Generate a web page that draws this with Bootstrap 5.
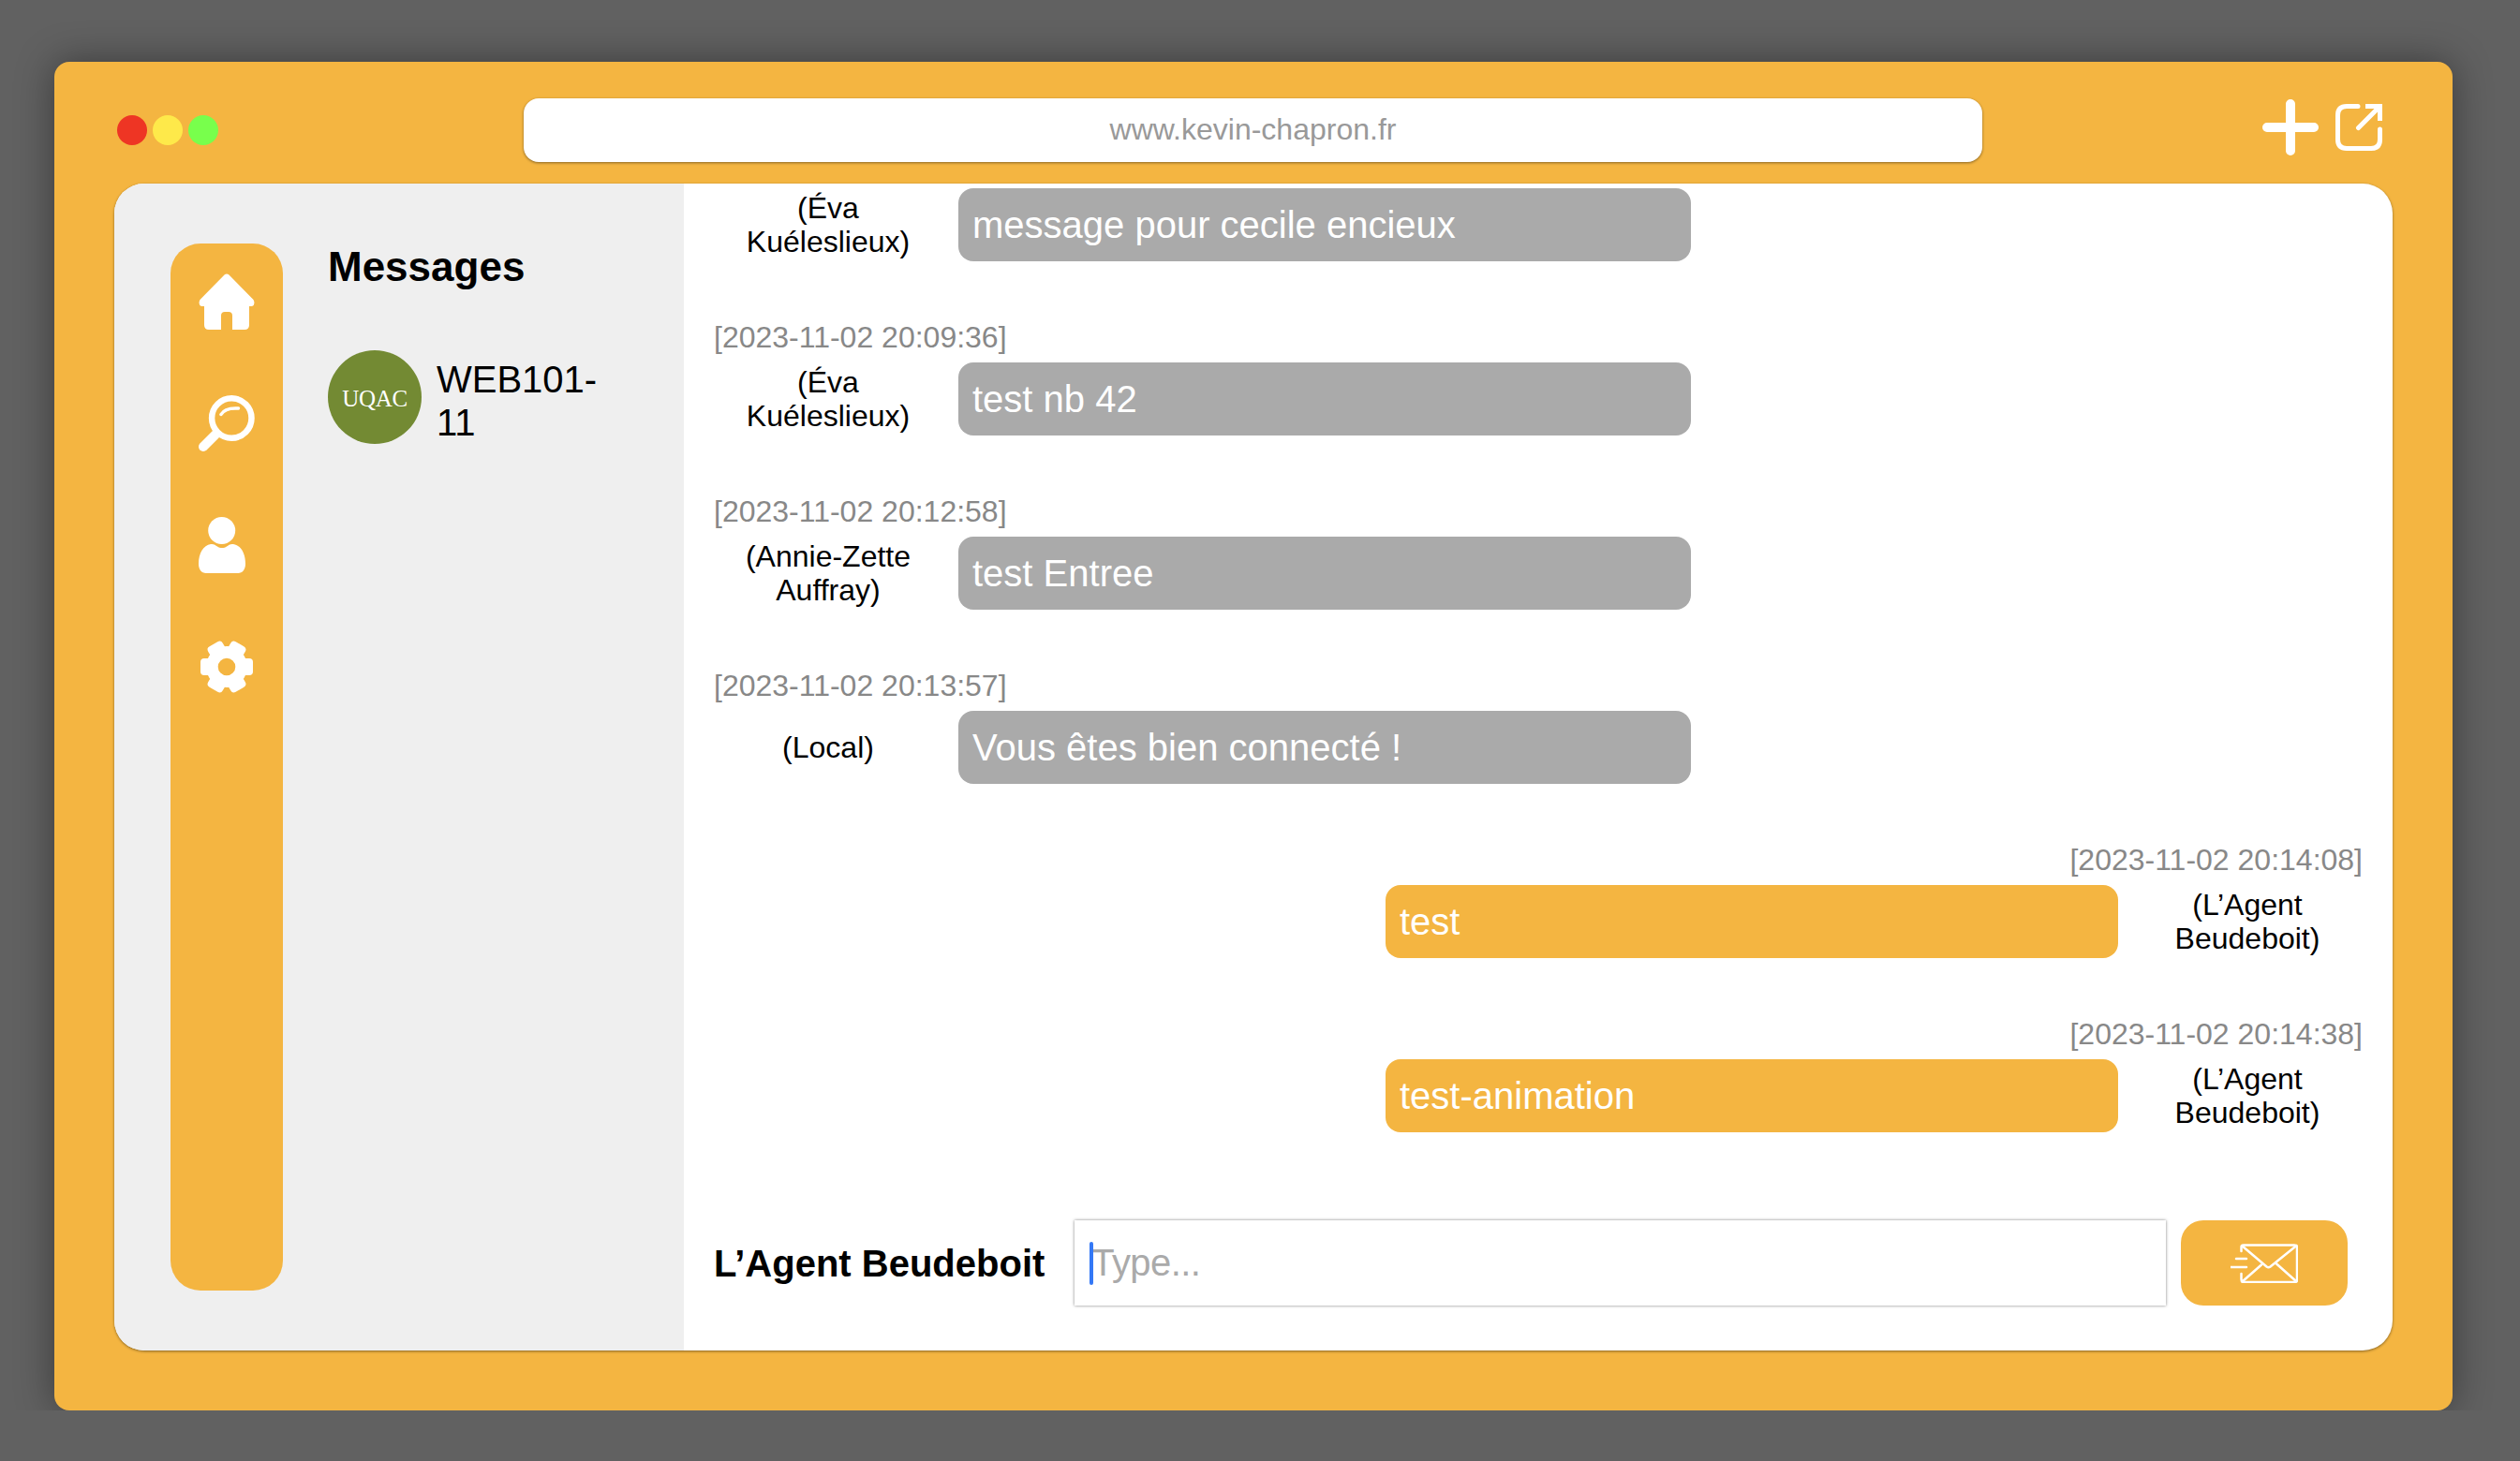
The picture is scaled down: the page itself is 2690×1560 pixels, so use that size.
<!DOCTYPE html>
<html lang="fr">

<head>
  <meta charset="UTF-8" />
  <title>Messages</title>
  <link href="https://cdn.jsdelivr.net/npm/bootstrap@5.3.2/dist/css/bootstrap.min.css" rel="stylesheet" />
  <style>
    body {
      font-family: "Liberation Sans", Arial, sans-serif;
      background: #616161;
      padding-top: 66px;
      color: #000;
    }

    .app-window {
      width: 2560px;
      height: 1440px;
      margin-left: 58px;
      background: #f4b541;
      border-radius: 16px;
      box-shadow: 0 0 40px rgba(0, 0, 0, .4);
    }

    /* top bar */
    .app-bar {
      height: 130px;
      padding: 39px 75px 0 67px;
    }

    .dot {
      width: 32px;
      height: 32px;
      border-radius: 50%;
      margin-top: 18px;
      margin-right: 6px;
    }

    .url-field {
      width: 1557px;
      height: 68px;
      margin-left: 320px;
      padding-bottom: 2px;
      background: #fff;
      border-radius: 16px;
      box-shadow: 0 1px 3px rgba(0, 0, 0, .45);
      font-size: 32px;
      color: #999;
    }

    .bar-icons {
      margin-left: auto;
      margin-top: 1px;
      gap: 18px;
    }

    /* inner frame */
    .app-frame {
      width: 2432px;
      height: 1246px;
      margin-left: 64px;
      background: #fff;
      border-radius: 32px;
      box-shadow: 0 1px 3px rgba(0, 0, 0, .45);
    }

    .side-panel {
      width: 608px;
      background: #efefef;
      padding: 64px 0 64px 60px;
    }

    .icon-rail {
      width: 120px;
      background: #f4b541;
      border-radius: 32px;
      padding: 32px 30px;
      gap: 70px;
    }

    .icon-rail svg {
      display: block;
    }

    .group-list {
      margin-left: 48px;
    }

    .group-title {
      font-size: 44px;
      font-weight: 700;
      line-height: 50px;
      margin: 0 0 64px;
    }

    .group-logo {
      width: 100px;
      height: 100px;
      padding-top: 3px;
      border-radius: 50%;
      background: #738a33;
      color: #fff;
      font-family: "Liberation Serif", serif;
      font-size: 25px;
      letter-spacing: -.3px;
    }

    .group-name {
      font-size: 40px;
      line-height: 46px;
      width: 210px;
      margin-left: 16px;
      padding-top: 7px;
    }

    /* conversation */
    .chat-side {
      min-width: 0;
    }

    .chat-log {
      min-height: 0;
      padding: 0 32px 0 32px;
    }

    .msg-time {
      font-size: 32px;
      line-height: 37px;
      color: #888;
      margin-bottom: 8px;
    }

    .msg-row {
      margin-bottom: 63px;
      flex-shrink: 0;
    }

    .msg-author {
      width: 244px;
      font-size: 32px;
      line-height: 36px;
      text-align: center;
      flex-shrink: 0;
    }

    .msg-bubble {
      width: 782px;
      height: 78px;
      padding: 0 15px;
      border-radius: 16px;
      color: #fff;
      font-size: 40px;
      line-height: 46px;
    }

    .msg-in .msg-bubble {
      background: #aaa;
      margin-left: 17px;
    }

    .msg-out .msg-bubble {
      background: #f4b541;
    }

    .msg-out .msg-author {
      width: 234px;
      margin: 0 6px 0 21px;
    }

    .send-row {
      padding: 31px 48px 48px 32px;
      flex-shrink: 0;
    }

    .send-name {
      font-size: 40px;
      font-weight: 700;
      white-space: nowrap;
    }

    .type-wrap {
      width: 1165px;
      margin-left: 32px;
    }

    .type-input {
      display: block;
      width: 100%;
      height: 91px;
      padding: 0 18px;
      border: 0;
      border-radius: 0;
      font-size: 40px;
      font-family: inherit;
      letter-spacing: -.6px;
      box-shadow: 0 0 3px rgba(0, 0, 0, .5);
      outline: none;
    }

    .type-input::placeholder {
      color: #aaa;
      opacity: 1;
    }

    .type-caret {
      left: 16px;
      top: 23px;
      width: 4px;
      height: 46px;
      border-radius: 2px;
      background: #3478f6;
    }

    .send-btn {
      width: 178px;
      height: 91px;
      margin-left: 16px;
      background: #f4b541;
      border: 0;
      border-radius: 24px;
    }
  </style>
</head>

<body>
  <div class="app-window d-flex flex-column">
    <div class="app-bar d-flex align-items-start flex-shrink-0">
      <span class="dot" style="background:#ee3524"></span>
      <span class="dot" style="background:#fee94a"></span>
      <span class="dot" style="background:#78ff4c"></span>
      <div class="url-field d-flex align-items-center justify-content-center">www.kevin-chapron.fr</div>
      <div class="bar-icons d-flex align-items-center">
        <svg width="60" height="60" viewBox="0 0 60 60" fill="none" stroke="#fff" stroke-width="10" stroke-linecap="round">
          <path d="M30 5V55M5 30H55" />
        </svg>
        <svg width="50" height="50" viewBox="0 0 50 50" fill="none" stroke="#fff" stroke-width="5" stroke-linecap="round">
          <path d="M24 2.5H12Q2.5 2.5 2.5 12V38Q2.5 47.5 12 47.5H38Q47.5 47.5 47.5 38V27" />
          <path d="M24.5 25.5L46 4" />
          <path d="M32 2.5H47.5V18" stroke-linecap="butt" />
        </svg>
      </div>
    </div>

    <div class="app-frame d-flex overflow-hidden">
      <div class="side-panel d-flex flex-shrink-0">
        <div class="icon-rail d-flex flex-column flex-shrink-0">
          <svg width="60" height="60" viewBox="0 0 60 60" fill="#fff">
            <path d="M27.5 1.5Q30 -.5 32.5 1.5L58.5 28Q61 33 57 35H54V55Q54 60 49 60H36V45Q36 41 32 41H28Q24 41 24 45V60H11Q6 60 6 55V35H3Q-1 33 1.5 28Z" />
          </svg>
          <svg width="60" height="60" viewBox="0 0 60 60" fill="none" stroke="#fff" stroke-linecap="round">
            <circle cx="35.3" cy="24.5" r="21.2" stroke-width="6.5" />
            <path d="M5 55L18 42" stroke-width="10" />
            <path d="M24 20.5Q28 13 42.5 14" stroke-width="3.5" />
          </svg>
          <svg width="60" height="60" viewBox="0 0 60 60" fill="#fff">
            <circle cx="24.7" cy="14.5" r="14.5" />
            <path d="M13 29C16 28.5 18 30 20 31.5C23 33.5 27 33.5 30 31.5C32 30 34 28.5 37 29C45 30 50 39 50 50C50 56 47 60 42 60H8C3 60 0 56 0 50C0 39 5 30 13 29Z" />
          </svg>
          <svg width="60" height="60" viewBox="-30 -30 60 60" fill="#fff">
            <circle r="15.65" fill="none" stroke="#fff" stroke-width="12.7" />
            <rect x="-9" y="-28" width="18" height="13" rx="4" transform="rotate(90)" />
            <rect x="-9" y="-28" width="18" height="13" rx="4" transform="rotate(30)" />
            <rect x="-9" y="-28" width="18" height="13" rx="4" transform="rotate(150)" />
            <rect x="-9" y="-28" width="18" height="13" rx="4" transform="rotate(210)" />
            <rect x="-9" y="-28" width="18" height="13" rx="4" transform="rotate(270)" />
            <rect x="-9" y="-28" width="18" height="13" rx="4" transform="rotate(330)" />
          </svg>
        </div>
        <div class="group-list">
          <h2 class="group-title">Messages</h2>
          <div class="d-flex align-items-center">
            <div class="group-logo d-flex align-items-center justify-content-center flex-shrink-0">UQAC</div>
            <div class="group-name">WEB101-11</div>
          </div>
        </div>
      </div>

      <div class="chat-side d-flex flex-column flex-grow-1">
        <div class="chat-log d-flex flex-column justify-content-end flex-grow-1 overflow-hidden">
          <div class="msg-row msg-in">
            <div class="d-flex align-items-center">
              <div class="msg-author">(Éva Kuéleslieux)</div>
              <div class="msg-bubble d-flex align-items-center">message pour cecile encieux</div>
            </div>
          </div>
          <div class="msg-row msg-in">
            <div class="msg-time">[2023-11-02 20:09:36]</div>
            <div class="d-flex align-items-center">
              <div class="msg-author">(Éva Kuéleslieux)</div>
              <div class="msg-bubble d-flex align-items-center">test nb 42</div>
            </div>
          </div>
          <div class="msg-row msg-in">
            <div class="msg-time">[2023-11-02 20:12:58]</div>
            <div class="d-flex align-items-center">
              <div class="msg-author">(Annie-Zette Auffray)</div>
              <div class="msg-bubble d-flex align-items-center">test Entree</div>
            </div>
          </div>
          <div class="msg-row msg-in">
            <div class="msg-time">[2023-11-02 20:13:57]</div>
            <div class="d-flex align-items-center">
              <div class="msg-author">(Local)</div>
              <div class="msg-bubble d-flex align-items-center">Vous êtes bien connecté !</div>
            </div>
          </div>
          <div class="msg-row msg-out">
            <div class="msg-time text-end">[2023-11-02 20:14:08]</div>
            <div class="d-flex align-items-center justify-content-end">
              <div class="msg-bubble d-flex align-items-center">test</div>
              <div class="msg-author">(L’Agent Beudeboit)</div>
            </div>
          </div>
          <div class="msg-row msg-out">
            <div class="msg-time text-end">[2023-11-02 20:14:38]</div>
            <div class="d-flex align-items-center justify-content-end">
              <div class="msg-bubble d-flex align-items-center">test-animation</div>
              <div class="msg-author">(L’Agent Beudeboit)</div>
            </div>
          </div>
        </div>

        <div class="send-row d-flex align-items-center">
          <div class="send-name">L’Agent Beudeboit</div>
          <div class="type-wrap position-relative">
            <input class="type-input" type="text" placeholder="Type..." />
            <span class="type-caret position-absolute"></span>
          </div>
          <button class="send-btn d-flex align-items-center justify-content-center" type="button" aria-label="Envoyer">
            <svg width="72" height="42" viewBox="0 0 72 42" fill="none" stroke="#fff" stroke-width="2.5" stroke-linecap="round" stroke-linejoin="round">
              <path d="M11.5 8V4Q11.5 1.5 14 1.5H68Q71 1.5 71 4V38Q71 41 68 41H14Q11.5 41 11.5 38V32" />
              <path d="M12 2L38.5 24.5Q40.5 26 42.5 24.5L70.5 2" />
              <path d="M12.5 40.5L33 22.5M70.5 40.5L48 20.5" />
              <path d="M6 16H17M.5 25H17" />
            </svg>
          </button>
        </div>
      </div>
    </div>
  </div>

  <script src="https://cdn.jsdelivr.net/npm/bootstrap@5.3.2/dist/js/bootstrap.bundle.min.js"></script>
</body>

</html>
